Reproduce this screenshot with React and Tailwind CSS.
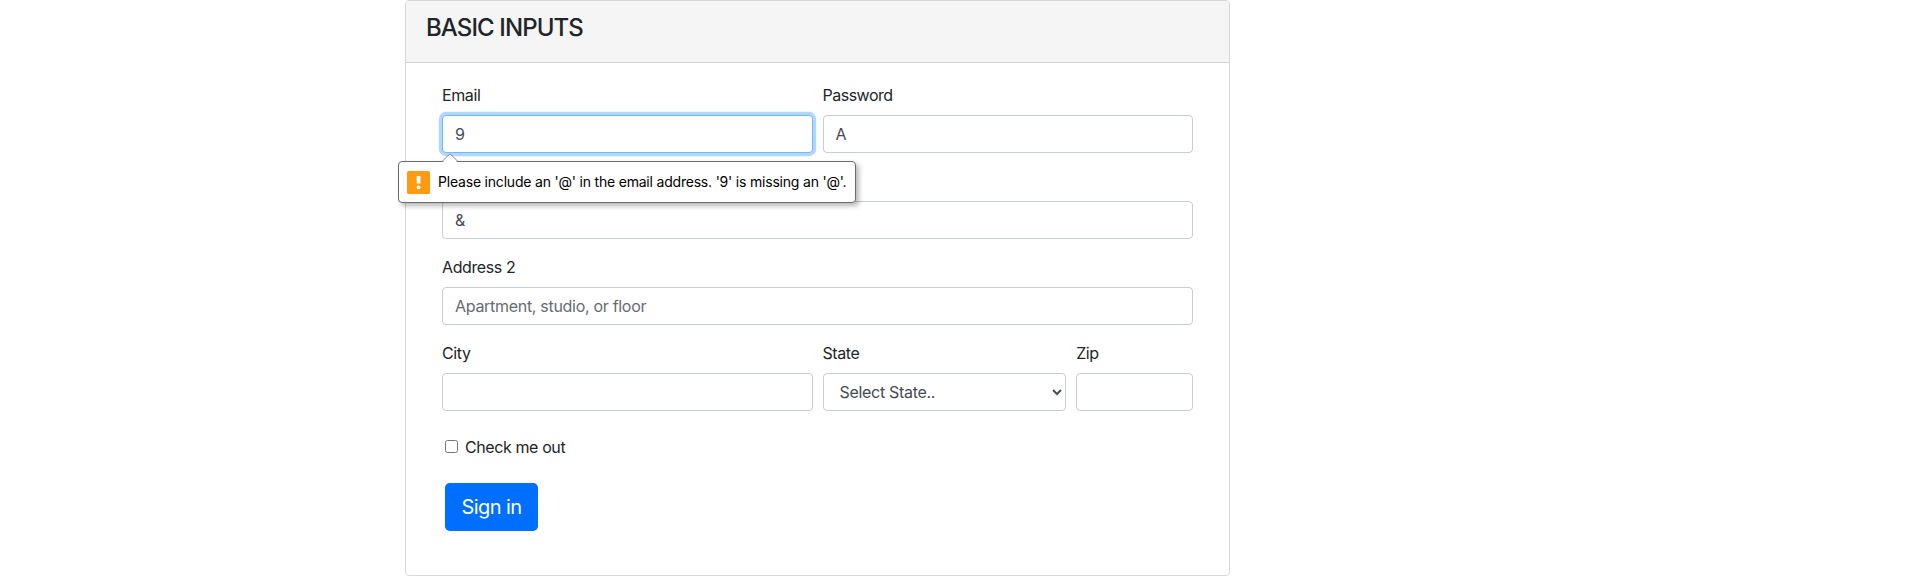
const controlBase =
  "block w-full h-[38px] rounded border bg-white px-3 py-1.5 text-base leading-6 tracking-[-0.3px] text-[#444b52] placeholder:text-[#636c74] placeholder:opacity-100 outline-none";
const control = controlBase + " border-[#c6cdd5]";
const focused = controlBase + " border-[#75b5fb] shadow-[0_0_0_3.2px_rgba(0,123,255,0.3)]";

function Field({ label, className, children }) {
  return (
    <div className={className}>
      <label className="mb-2 block min-h-6 leading-6">{label}</label>
      {children}
    </div>
  );
}

function ValidationBubble() {
  return (
    <div className="absolute -left-11 top-[78px] z-10 flex h-[42px] w-[458px] items-center rounded border border-[#6b6b6b] bg-white pl-2 shadow-[3px_3px_5px_rgba(0,0,0,0.28)]">
      <svg className="absolute -top-[9px] left-[42px]" width="18" height="10" viewBox="0 0 18 10">
        <path d="M1 10 L9 1 L17 10 Z" fill="#fff" />
        <path d="M1 8.5 L9 0.8 L17 8.5" fill="none" stroke="#8a8a8a" strokeWidth="1" />
      </svg>
      <svg className="mr-2 shrink-0" width="23" height="23" viewBox="0 0 23 23">
        <rect width="23" height="23" rx="1.5" fill="#ff9b12" />
        <rect x="9.7" y="5" width="3.8" height="7.5" fill="#fff" />
        <circle cx="11.6" cy="16.3" r="1.9" fill="#fff" />
      </svg>
      <span className="whitespace-nowrap text-sm tracking-[-0.2px] text-black">
        Please include an '@' in the email address. '9' is missing an '@'.
      </span>
    </div>
  );
}

export default function App() {
  return (
    <div className="h-[576px] bg-white pl-[405px] font-['Inter','Liberation_Sans',sans-serif] text-base tracking-[-0.4px] text-[#212529]">
      <div className="h-[576px] w-[825px] rounded border border-[#d8d8d8] bg-white">
        <div className="h-[62px] rounded-t-[3px] border-b border-[#d3d3d3] bg-[#f5f5f5] px-5 py-3">
          <h4 className="text-2xl font-[550] leading-[30px] tracking-[-0.9px]">BASIC INPUTS</h4>
        </div>
        <form className="px-9 pt-5">
          <div className="grid grid-cols-12 gap-x-2.5 gap-y-4">
            <Field label="Email" className="relative col-span-6">
              <input className={focused} defaultValue="9" />
              <ValidationBubble />
            </Field>
            <Field label="Password" className="col-span-6 tracking-[-0.5px]">
              <input className={control} defaultValue="A" />
            </Field>
            <Field className="col-span-12">
              <input className={control} defaultValue="&" />
            </Field>
            <Field label="Address 2" className="col-span-12">
              <input className={control} placeholder="Apartment, studio, or floor" />
            </Field>
            <Field label="City" className="col-span-6">
              <input className={control} />
            </Field>
            <Field label="State" className="col-span-4">
              <div className="relative">
                <select className={control + " appearance-none pl-4"}>
                  <option>Select State..</option>
                </select>
                <svg className="absolute right-1 top-4" width="10" height="7" viewBox="0 0 10 7">
                  <path d="M1 1 L5 5 L9 1" fill="none" stroke="#495057" strokeWidth="2" />
                </svg>
              </div>
            </Field>
            <Field label="Zip" className="col-span-2">
              <input className={control} />
            </Field>
          </div>
          <label className="ml-[3px] mt-6 flex h-6 items-center">
            <input
              type="checkbox"
              className="-mt-px mb-px mr-[7px] h-[13px] w-[13px] appearance-none rounded-[2.5px] border border-[#767676] bg-white"
            />
            Check me out
          </label>
          <button
            type="button"
            className="ml-[3px] mt-6 h-12 w-[93px] rounded-[4.8px] bg-[#006fff] text-xl tracking-[-0.6px] text-white"
          >
            Sign in
          </button>
        </form>
      </div>
    </div>
  );
}
